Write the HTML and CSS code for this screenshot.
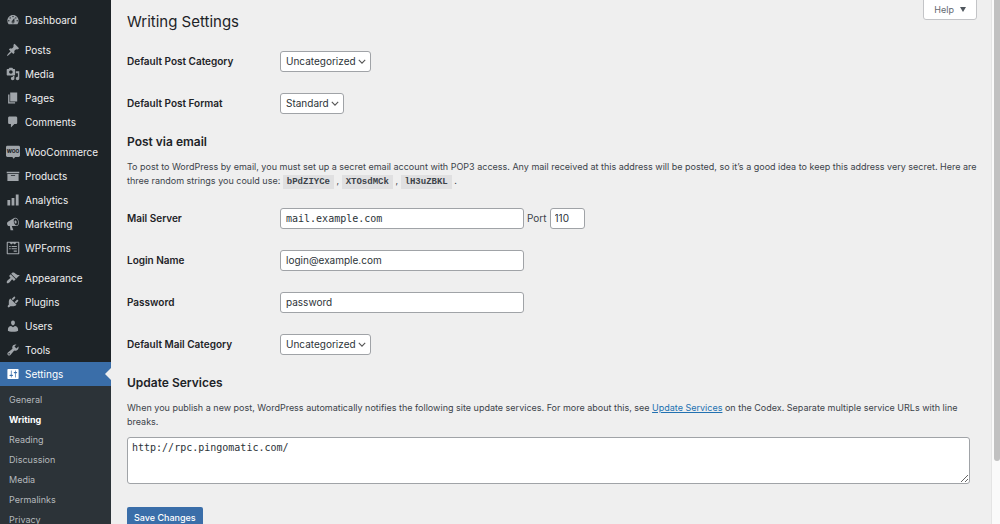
FILE: index.html
```html
<!DOCTYPE html>
<html lang="en">
<head>
    <meta charset="UTF-8">
    <meta name="viewport" content="width=device-width, initial-scale=1.0">
    <title>Writing Settings</title>
    <link rel="stylesheet" href="styles.css">
</head>
<body>
    <nav class="admin-menu">
        <ul class="menu">
            <li><a href="#"><svg class="icon" viewBox="0 0 20 20"><path d="M3.76 16h12.48c1.1-1.37 1.76-3.11 1.76-5 0-4.42-3.58-8-8-8s-8 3.58-8 8c0 1.89.66 3.63 1.76 5zM10 4c.55 0 1 .45 1 1s-.45 1-1 1-1-.45-1-1 .45-1 1-1zM6 6c.55 0 1 .45 1 1s-.45 1-1 1-1-.45-1-1 .45-1 1-1zm8 0c.55 0 1 .45 1 1s-.45 1-1 1-1-.45-1-1 .45-1 1-1zm-5.37 5.55L12 7v6c0 1.1-.9 2-2 2s-2-.9-2-2c0-.57.24-1.08.63-1.45zM4 10c.55 0 1 .45 1 1s-.45 1-1 1-1-.45-1-1 .45-1 1-1zm12 0c.55 0 1 .45 1 1s-.45 1-1 1-1-.45-1-1 .45-1 1-1zm-5 3c0-.55-.45-1-1-1s-1 .45-1 1 .45 1 1 1 1-.45 1-1z"/></svg>Dashboard</a></li>
            <li class="separator"></li>
            <li><a href="#"><svg class="icon" viewBox="0 0 20 20"><path d="M10.44 3.02l1.82-1.82 6.36 6.35-1.83 1.82c-1.05-.68-2.48-.57-3.41.36l-.75.75c-.92.93-1.04 2.35-.35 3.41l-1.83 1.82-2.41-2.41-2.8 2.79c-.42.42-3.38 2.71-3.8 2.29s1.86-3.39 2.28-3.81l2.79-2.79L4.1 9.36l1.83-1.82c1.05.69 2.48.57 3.4-.36l.75-.75c.93-.92 1.05-2.35.36-3.41z"/></svg>Posts</a></li>
            <li><a href="#"><svg class="icon" viewBox="0 0 20 20"><path d="M13 11V4c0-.55-.45-1-1-1h-1.67L9 1H5L3.67 3H2c-.55 0-1 .45-1 1v7c0 .55.45 1 1 1h10c.55 0 1-.45 1-1zM7 4.5c1.38 0 2.5 1.12 2.5 2.5S8.38 9.5 7 9.5 4.5 8.38 4.5 7 5.62 4.5 7 4.5zM14 6h5v10.5c0 1.38-1.12 2.5-2.5 2.5S14 17.88 14 16.5s1.12-2.5 2.5-2.5c.17 0 .34.02.5.05V9h-3V6zm-4 8.05V13h2v3.5c0 1.38-1.12 2.5-2.5 2.5S7 17.88 7 16.5 8.12 14 9.5 14c.17 0 .34.02.5.05z"/></svg>Media</a></li>
            <li><a href="#"><svg class="icon" viewBox="0 0 20 20"><path d="M6 15V2h10v13H6zm-1 1h8v2H3V5h2v11z"/></svg>Pages</a></li>
            <li><a href="#"><svg class="icon" viewBox="0 0 20 20"><path d="M5 2h9c1.1 0 2 .9 2 2v7c0 1.1-.9 2-2 2h-2l-5 5v-5H5c-1.1 0-2-.9-2-2V4c0-1.1.9-2 2-2z"/></svg>Comments</a></li>
            <li class="separator"></li>
            <li><a href="#"><svg class="icon" viewBox="0 0 20 20"><path d="M2 1h16c1.1 0 2 .9 2 2v12c0 1.1-.9 2-2 2h-5l-2 2.5-2-2.5H2c-1.1 0-2-.9-2-2V3c0-1.1.9-2 2-2z"/><text class="woo" x="10" y="12" text-anchor="middle">WOO</text></svg>WooCommerce</a></li>
            <li><a href="#"><svg class="icon" viewBox="0 0 20 20"><path d="M19 4v2H1V4h18zM2 7h16v10H2V7zm11 3V9H7v1h6z"/></svg>Products</a></li>
            <li><a href="#"><svg class="icon" viewBox="0 0 20 20"><path d="M18 18V2h-4v16h4zm-6 0V7H8v11h4zm-6 0v-8H2v8h4z"/></svg>Analytics</a></li>
            <li><a href="#"><svg class="icon" viewBox="0 0 20 20"><path d="M18.15 5.94c.46 1.62.38 3.22-.02 4.48-.42 1.28-1.26 2.18-2.3 2.48-.16.06-.26.06-.4.06-.06.02-.12.02-.18.02-.06.02-.14.02-.22.02h-6.8l2.22 5.5c.02.14-.06.26-.14.34-.08.1-.24.16-.34.16H6.95c-.1 0-.26-.06-.34-.16-.08-.08-.16-.2-.14-.34l-1-5.5H4.25l-.02-.02c-.5.06-1.08-.18-1.54-.62s-.88-1.08-1.06-1.88c-.24-.8-.2-1.56-.02-2.2.18-.62.58-1.08 1.06-1.3l.02-.02 9-5.4c.1-.06.18-.1.24-.16.06-.04.14-.08.24-.12.16-.08.28-.12.5-.18 1.04-.3 2.24.1 3.22.98s1.84 2.24 2.26 3.86zm-2.58 5.98h-.02c.4-.1.74-.34 1.04-.7.58-.7.86-1.76.86-3.04 0-.64-.1-1.3-.28-1.98-.34-1.36-1.02-2.5-1.78-3.24s-1.68-1.1-2.46-.88c-.82.22-1.4.96-1.7 2-.32 1.04-.28 2.36.06 3.72.38 1.36 1 2.5 1.8 3.24.78.74 1.62 1.1 2.48.88zm-2.54-7.08c.22-.04.42-.02.62.04.38.16.76.48 1.02 1s.42 1.2.42 1.78c0 .3-.04.56-.12.8-.18.48-.44.84-.86.94-.34.1-.8-.06-1.14-.4s-.64-.86-.78-1.5c-.18-.62-.12-1.24.02-1.72s.48-.84.82-.94z"/></svg>Marketing</a></li>
            <li><a href="#"><svg class="icon" viewBox="0 0 20 20"><path fill-rule="evenodd" d="M2 1h16c.6 0 1 .4 1 1v16c0 .6-.4 1-1 1H2c-.6 0-1-.4-1-1V2c0-.6.4-1 1-1zm.6 1.6v14.8h14.8V2.6h-2.6L12.6 5 10 3.2 7.4 5 5.2 2.6zM4.5 7h2.2v1.6H4.5zm3.5 0h7.5v1.6H8zM4.5 10.2h2.2v1.6H4.5zm3.5 0h7.5v1.6H8zm3 3.3h4.5v1.7H11z"/></svg>WPForms</a></li>
            <li class="separator"></li>
            <li><a href="#"><svg class="icon" viewBox="0 0 20 20"><path d="M14.48 11.06L7.41 3.99l1.5-1.5c.5-.56 2.3-.47 3.51.32 1.21.8 1.43 1.28 2.91 2.1 1.18.64 2.45 1.26 4.45.85zm-.71.71L6.7 4.7 4.93 6.47c-.39.39-.39 1.02 0 1.41l1.06 1.06c.39.39.39 1.03 0 1.42-.6.6-1.43 1.11-2.21 1.69-.35.26-.7.53-1.01.84C1.43 14.23.4 16.08 1.4 17.07c.99 1 2.84-.03 4.18-1.36.31-.31.58-.66.85-1.02.57-.78 1.08-1.61 1.69-2.21.39-.39 1.02-.39 1.41 0l1.06 1.06c.39.39 1.02.39 1.41 0z"/></svg>Appearance</a></li>
            <li><a href="#"><svg class="icon" viewBox="0 0 20 20"><path d="M13.11 4.36L9.87 7.6 8 5.73l3.24-3.24c.35-.34 1.05-.2 1.56.32.52.51.66 1.21.31 1.55zm-8 1.77l.91-1.12 9.01 9.01-1.19.84c-.71.71-2.63 1.16-3.82 1.16H6.14L4.9 17.26c-.59.59-1.54.59-2.12 0-.59-.58-.59-1.53 0-2.12l1.24-1.24v-3.88c0-1.13.4-3.19 1.09-3.89zm7.26 3.97l3.24-3.24c.34-.35 1.04-.21 1.55.31.52.51.66 1.21.31 1.55l-3.24 3.25z"/></svg>Plugins</a></li>
            <li><a href="#"><svg class="icon" viewBox="0 0 20 20"><path d="M10 9.25c-2.27 0-2.73-3.44-2.73-3.44C7 4.02 7.82 2 9.97 2c2.16 0 2.98 2.02 2.71 3.81 0 0-.41 3.44-2.68 3.44zm0 2.57L12.72 10c2.39 0 4.52 2.33 4.52 4.53v2.49s-3.65 1.13-7.24 1.13c-3.65 0-7.24-1.13-7.24-1.13v-2.49c0-2.25 1.94-4.48 4.47-4.48z"/></svg>Users</a></li>
            <li><a href="#"><svg class="icon" viewBox="0 0 20 20"><path d="M16.68 9.77c-1.34 1.34-3.3 1.67-4.95.99l-5.41 6.52c-.99.99-2.59.99-3.58 0s-.99-2.59 0-3.57l6.52-5.42c-.68-1.65-.35-3.61.99-4.95 1.28-1.28 3.12-1.62 4.72-1.06l-2.89 2.89 2.82 2.82 2.86-2.87c.53 1.58.18 3.39-1.08 4.65zM3.81 16.21c.4.39 1.04.39 1.43 0 .4-.4.4-1.04 0-1.43-.39-.4-1.03-.4-1.43 0-.39.39-.39 1.03 0 1.43z"/></svg>Tools</a></li>
            <li class="current"><a href="#"><svg class="icon" viewBox="0 0 20 20"><path d="M18 16V4c0-.55-.45-1-1-1H3c-.55 0-1 .45-1 1v12c0 .55.45 1 1 1h14c.55 0 1-.45 1-1zM8 11h1c.55 0 1 .45 1 1s-.45 1-1 1H8v1.5c0 .28-.22.5-.5.5s-.5-.22-.5-.5V13H6c-.55 0-1-.45-1-1s.45-1 1-1h1V5.5c0-.28.22-.5.5-.5s.5.22.5.5V11zm5-2h-1c-.55 0-1-.45-1-1s.45-1 1-1h1V5.5c0-.28.22-.5.5-.5s.5.22.5.5V7h1c.55 0 1 .45 1 1s-.45 1-1 1h-1v5.5c0 .28-.22.5-.5.5s-.5-.22-.5-.5V9z"/></svg>Settings</a></li>
        </ul>
        <ul class="submenu">
            <li><a href="#">General</a></li>
            <li><a href="#" class="active">Writing</a></li>
            <li><a href="#">Reading</a></li>
            <li><a href="#">Discussion</a></li>
            <li><a href="#">Media</a></li>
            <li><a href="#">Permalinks</a></li>
            <li><a href="#">Privacy</a></li>
        </ul>
    </nav>

    <main class="content">
        <button type="button" class="help">Help <span class="arrow"></span></button>
        <h1>Writing Settings</h1>

        <form>
            <div class="row">
                <label for="post-category">Default Post Category</label>
                <select id="post-category"><option>Uncategorized</option></select>
            </div>
            <div class="row">
                <label for="post-format">Default Post Format</label>
                <select id="post-format"><option>Standard</option></select>
            </div>

            <h2>Post via email</h2>
            <p>To post to WordPress by email, you must set up a secret email account with POP3 access. Any mail received at this address will be posted, so it’s a good idea to keep this address very secret. Here are three random strings you could use: <code>bPdZIYCe</code> , <code>XTOsdMCk</code> , <code>lH3uZBKL</code> .</p>

            <div class="row">
                <label for="mail-server">Mail Server</label>
                <div class="server">
                    <input type="text" class="field mono" id="mail-server" value="mail.example.com">
                    <label for="port" class="port-label">Port</label>
                    <input type="text" class="field port" id="port" value="110">
                </div>
            </div>
            <div class="row">
                <label for="login">Login Name</label>
                <input type="text" class="field" id="login" value="login@example.com">
            </div>
            <div class="row">
                <label for="password">Password</label>
                <input type="text" class="field" id="password" value="password">
            </div>
            <div class="row">
                <label for="mail-category">Default Mail Category</label>
                <select id="mail-category"><option>Uncategorized</option></select>
            </div>

            <h2 id="services-title">Update Services</h2>
            <p>When you publish a new post, WordPress automatically notifies the following site update services. For more about this, see <a href="#">Update Services</a> on the Codex. Separate multiple service URLs with line breaks.</p>
            <textarea class="mono" aria-labelledby="services-title">http://rpc.pingomatic.com/</textarea>

            <button type="submit" class="save">Save Changes</button>
        </form>
    </main>

    <div class="scrollbar"><div class="thumb"></div></div>
</body>
</html>
```
FILE: styles.css
```css
* {
    box-sizing: border-box;
}

body {
    margin: 0;
    display: flex;
    height: 100vh;
    overflow: hidden;
    background-color: #efefef;
    color: #3c434a;
    font-family: Inter, "Liberation Sans", sans-serif;
    font-size: 9px;
    line-height: 14px;
}

/* left menu */
.admin-menu {
    flex: 0 0 111px;
    background-color: #1d2327;
}

.menu,
.submenu {
    list-style: none;
    margin: 0;
    padding: 0;
}

.menu {
    padding-top: 8px;
}

.menu a {
    display: flex;
    align-items: center;
    gap: 5px;
    height: 24px;
    padding-left: 6px;
    color: #f0f0f1;
    font-size: 10px;
    text-decoration: none;
}

.separator {
    height: 6px;
}

.icon {
    width: 14px;
    height: 14px;
    fill: #a0a5aa;
}

.woo {
    fill: #1d2327;
    font-size: 7px;
    font-weight: 800;
}

.menu .current {
    position: relative;
    background-color: #3a6ea9;
}

.current a {
    color: #fff;
}

.current .icon {
    fill: #fff;
}

.current::after {
    content: "";
    position: absolute;
    right: 0;
    top: 6px;
    border: 6px solid transparent;
    border-left: none;
    border-right-color: #efefef;
}

.submenu {
    height: 100%;
    padding-top: 4px;
    background-color: #2c3338;
}

.submenu a {
    display: block;
    padding-left: 9px;
    color: #b5b9bd;
    line-height: 20px;
    text-decoration: none;
}

.submenu .active {
    color: #fff;
    font-weight: 700;
}

/* page */
.content {
    position: relative;
    flex: 1;
    min-width: 0;
    padding: 12px 12px 0 16px;
}

h1,
h2 {
    margin: 0;
    color: #1d2327;
}

h1 {
    margin-bottom: 8px;
    font-size: 15px;
    font-weight: 400;
    line-height: 20px;
}

h2 {
    padding: 9px 0;
    font-size: 12px;
    font-weight: 600;
    line-height: 18px;
}

p {
    margin: 0 0 8px;
}

p a {
    color: #2271b1;
}

code {
    padding: 2px 4px;
    background-color: #e0e0e1;
    font-family: "Liberation Mono", monospace;
    font-size: 9px;
    font-weight: 700;
}

.help {
    position: absolute;
    top: -1px;
    right: 14px;
    display: flex;
    align-items: center;
    gap: 6px;
    height: 21px;
    padding: 0 10px;
    border: 1px solid #c3c4c7;
    border-radius: 0 0 3px 3px;
    background-color: #fff;
    color: #646970;
    font-family: inherit;
    font-size: 9px;
}

.arrow {
    border: 3px solid transparent;
    border-top: 5px solid #50575e;
    border-bottom: none;
}

.row {
    display: flex;
    align-items: center;
    height: 42px;
}

.row > label {
    flex: 0 0 153px;
    color: #1d2327;
    font-size: 10px;
    font-weight: 600;
}

.field,
select {
    height: 21px;
    border: 1px solid #a0a3a7;
    border-radius: 3px;
    background-color: #fff;
    color: #2c3338;
    font-family: inherit;
    font-size: 10px;
}

.field {
    width: 244px;
    padding: 0 5px;
}

select {
    appearance: none;
    padding: 0 14px 0 5px;
    background: #fff url("data:image/svg+xml,%3Csvg xmlns='http://www.w3.org/2000/svg' viewBox='0 0 10 6'%3E%3Cpath d='M1 1l4 4 4-4' fill='none' stroke='%23555' stroke-width='1.4'/%3E%3C/svg%3E") no-repeat right 4px center;
    background-size: 8px 5px;
}

.server {
    display: flex;
    align-items: center;
    gap: 3px;
}

.port-label {
    font-size: 10px;
}

.port {
    width: 35px;
    padding: 0 4px;
}

.field.mono,
.mono {
    font-family: "DejaVu Sans Mono", monospace;
    font-size: 10px;
}

textarea {
    display: block;
    width: 99%;
    height: 47px;
    margin: 0 0 23px;
    padding: 3px 4px;
    border: 1px solid #a0a3a7;
    border-radius: 3px;
    color: #2c3338;
    line-height: 14px;
}

.save {
    height: 21px;
    padding: 0 7px;
    border: none;
    border-radius: 2px;
    background-color: #3a6ea9;
    color: #fff;
    font-family: inherit;
    font-size: 9px;
    font-weight: 500;
}

.scrollbar {
    flex: 0 0 9px;
    padding-left: 2px;
    border-left: 1px solid #e4e4e4;
    background-color: #fafafa;
}

.thumb {
    width: 6px;
    height: 88%;
    border-radius: 0 0 3px 3px;
    background-color: #c1c1c1;
}
```
